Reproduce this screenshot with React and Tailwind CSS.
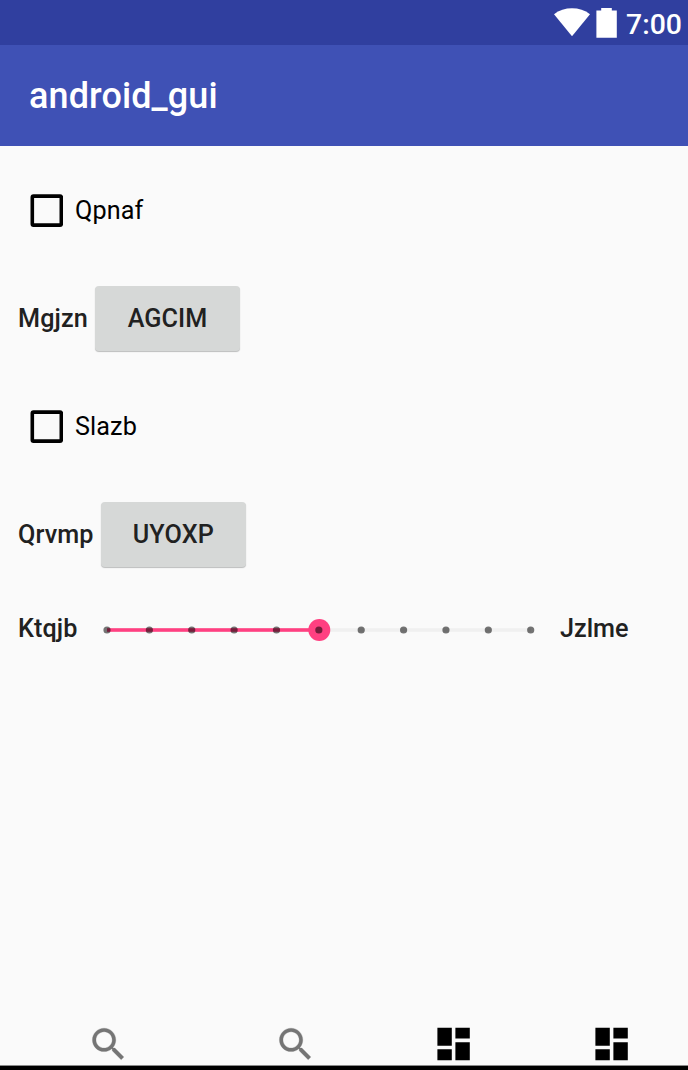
import React from "react";

function CheckboxRow({ label }) {
  return (
    <div className="flex h-[64px] items-center pl-[30px]">
      <svg width="33" height="33" viewBox="0 0 33 33" className="mt-px">
        <rect x="2.3" y="2.1" width="29" height="29" rx="1.2" fill="none" stroke="#000" strokeWidth="3.6" />
      </svg>
      <span className="ml-3 mt-[2px] text-[25.2px] leading-[30px] tracking-[0.1px] text-black">{label}</span>
    </div>
  );
}

function ButtonRow({ label, action }) {
  return (
    <div className="flex h-[66px] items-center pl-[18px] text-[25.2px] font-medium leading-[30px] tracking-[0.1px] text-[#212121]">
      <span className="mr-[7px] mt-[2px]">{label}</span>
      <button className="h-[65px] w-[145.4px] rounded-[4px] bg-[#d6d8d7] pt-[2px] font-medium shadow-[0_1px_1px_0_#bcbdbd]">
        {action}
      </button>
    </div>
  );
}

function Slider() {
  const ticks = Array.from({ length: 11 }, (_, i) => 12 + i * 42.37);
  return (
    <svg width="448" height="30" viewBox="0 0 448 30">
      <rect x="12" y="13.2" width="424" height="3.6" fill="#f0f0f0" />
      <rect x="12" y="13.2" width="212" height="3.6" fill="#ff4081" />
      <circle cx="224.3" cy="15" r="11" fill="#ff4081" />
      {ticks.map((x) => (
        <circle key={x} cx={x} cy="15" r="3.6" fill="#000" fillOpacity="0.54" />
      ))}
    </svg>
  );
}

function SearchIcon() {
  return (
    <svg width="43.2" height="43.2" viewBox="0 -0.45 24 24" fill="#757575" stroke="#757575" strokeWidth="0.15">
      <path d="M15.5 14h-.79l-.28-.27C15.41 12.59 16 11.11 16 9.5 16 5.91 13.09 3 9.5 3S3 5.91 3 9.5 5.91 16 9.5 16c1.61 0 3.09-.59 4.23-1.57l.27.28v.79l5 4.99L20.49 19l-4.99-5zm-6 0C7.01 14 5 11.99 5 9.5S7.01 5 9.5 5 14 7.01 14 9.5 11.99 14 9.5 14z" />
    </svg>
  );
}

function DashboardIcon() {
  return (
    <svg width="43.2" height="43.2" viewBox="0 -0.2 24 24" fill="#000">
      <path d="M3 13h8V3H3v10zm0 8h8v-6H3v6zm10 0h8V11h-8v10zm0-18v6h8V3h-8z" />
    </svg>
  );
}

export default function App() {
  return (
    <div className="flex h-[1070px] w-[688px] flex-col overflow-hidden bg-[#fafafa] font-['Roboto',sans-serif]">
      <div className="flex h-[45px] items-center justify-end bg-[#303f9f] pr-[6px] text-white">
        <svg width="64" height="45" viewBox="0 0 64 45" fill="#fff">
          <path d="M0 14.2C10 6.4 26 6.4 36 14.2L18 36.2Z" />
          <path d="M47.2 8h10.6v2.6h5v27.2H42.4V10.6h4.8Z" />
        </svg>
        <span className="ml-[8px] mt-[4px] text-[28.4px] font-medium leading-[34px]">7:00</span>
      </div>
      <header className="flex h-[101px] items-center bg-[#3f51b5] pl-[29px]">
        <h1 className="text-[36px] font-medium leading-[42px] tracking-[0.1px] text-white">android_gui</h1>
      </header>
      <main className="flex flex-1 flex-col pt-[32px]">
        <CheckboxRow label="Qpnaf" />
        <div className="mt-[43px]">
          <ButtonRow label="Mgjzn" action="AGCIM" />
        </div>
        <div className="mt-[43px]">
          <CheckboxRow label="Slazb" />
        </div>
        <div className="mt-[43px]">
          <ButtonRow label="Qrvmp" action="UYOXP" />
        </div>
        <div className="mt-[48px] flex h-[30px] items-center pl-[18px] text-[25.2px] font-medium leading-[30px] tracking-[0.1px] text-[#212121]">
          <span className="-mt-[2px] w-[77px]">Ktqjb</span>
          <Slider />
          <span className="-mt-[2px] ml-[17px] tracking-normal">Jzlme</span>
        </div>
      </main>
      <nav className="flex h-[43px] pl-[86.6px]">
        <SearchIcon />
        <div className="w-[144px]" />
        <SearchIcon />
        <div className="w-[114.6px]" />
        <DashboardIcon />
        <div className="w-[115.2px]" />
        <DashboardIcon />
      </nav>
      <div className="h-[5px] shrink-0 border-t border-[#8a8a8a] bg-black" />
    </div>
  );
}
